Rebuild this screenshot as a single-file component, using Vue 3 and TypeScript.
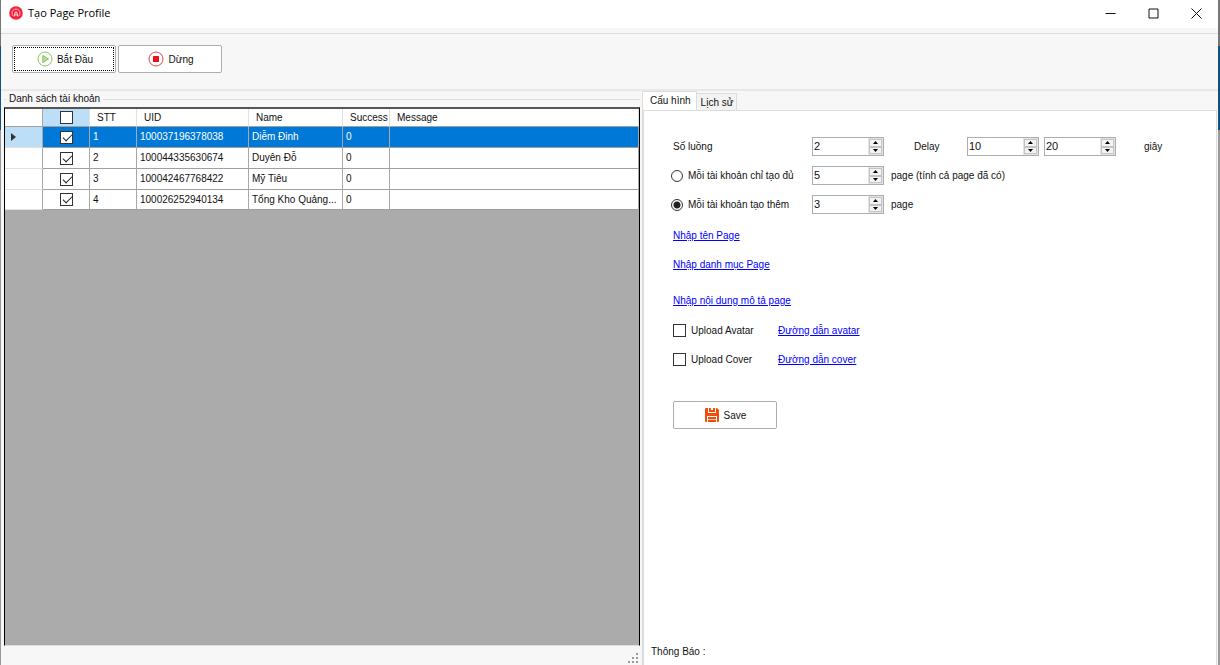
<script setup lang="ts">
import { reactive, ref } from 'vue'

interface Account {
  checked: boolean
  uid: string
  name: string
  success: number
  message: string
}

const accounts = reactive<Account[]>([
  { checked: true, uid: '100037196378038', name: 'Diễm Đinh', success: 0, message: '' },
  { checked: true, uid: '100044335630674', name: 'Duyên Đỗ', success: 0, message: '' },
  { checked: true, uid: '100042467768422', name: 'Mỹ Tiêu', success: 0, message: '' },
  { checked: true, uid: '100026252940134', name: 'Tổng Kho Quảng...', success: 0, message: '' },
])
const allChecked = ref(false)
const selected = ref(0)
const tab = ref<'config' | 'history'>('config')
const mode = ref<'upto' | 'more'>('more')
const values = reactive({ threads: 2, min: 10, max: 20, upto: 5, more: 3 })
type Key = keyof typeof values
const upload = reactive({ avatar: false, cover: false })

const spinners: Record<Key, string> = {
  threads: 'Số luồng',
  min: 'Delay',
  max: 'Delay',
  upto: 'Mỗi tài khoản chỉ tạo đủ',
  more: 'Mỗi tài khoản tạo thêm',
}
const delayKeys: Key[] = ['min', 'max']

interface Row {
  key: Key
  mode?: 'upto' | 'more'
  after?: string
}
const rows: Row[] = [
  { key: 'threads' },
  { key: 'upto', mode: 'upto', after: 'page (tính cả page đã có)' },
  { key: 'more', mode: 'more', after: 'page' },
]

function toggleAll() {
  accounts.forEach((a) => (a.checked = allChecked.value))
}
function step(key: Key, by: number) {
  values[key] = Math.max(0, Number(values[key]) + by)
}
</script>

<template>
  <div class="desktop">
    <main class="window">
      <header class="titlebar">
        <svg class="logo" viewBox="0 0 14 14" aria-hidden="true">
          <circle cx="7" cy="7" r="6.8" fill="#f9203c" />
          <path d="M4.300 10A4 4 0 1 1 9.700 10" fill="none" stroke="#ffc9cf" stroke-width="0.9" />
          <path d="M5.200 10.500L6 6.500Q7 4.800 8 6.500L8.800 10.500M7 7v3" fill="none" stroke="#ffe3e6" stroke-width="0.9" />
        </svg>
        <h1>Tạo Page Profile</h1>
        <div class="controls">
          <button type="button" aria-label="Minimize">
            <svg viewBox="0 0 11 11"><path d="M0.500 5.500H10.500" /></svg>
          </button>
          <button type="button" aria-label="Maximize">
            <svg viewBox="0 0 11 11"><path d="M1 1H10V10H1Z" /></svg>
          </button>
          <button type="button" aria-label="Close">
            <svg viewBox="0 0 11 11"><path d="M0.500 0.500L10.500 10.500M10.500 0.500L0.500 10.500" /></svg>
          </button>
        </div>
      </header>

      <section class="toolbar">
        <button type="button" class="btn focused">
          <svg viewBox="0 0 16 16" aria-hidden="true">
            <circle cx="8" cy="8" r="7" fill="#fff" stroke="#8cc665" stroke-width="1" />
            <path d="M5.800 4.500L11.500 8L5.800 11.500Z" fill="#b5dd98" stroke="#7dbd52" stroke-width="0.900" />
          </svg>
          <span>Bắt Đầu</span>
        </button>
        <button type="button" class="btn">
          <svg viewBox="0 0 16 16" aria-hidden="true">
            <circle cx="8" cy="8" r="7" fill="#fff" stroke="#e04a50" stroke-width="1" />
            <rect x="5" y="5" width="6" height="6" rx="0.500" fill="#f00f14" />
          </svg>
          <span>Dừng</span>
        </button>
      </section>

      <div class="panes">
        <section class="left">
          <h2><span>Danh sách tài khoản</span></h2>
          <div class="grid">
            <table>
              <colgroup>
                <col class="c-mark" /><col class="c-check" /><col class="c-stt" /><col class="c-uid" />
                <col class="c-name" /><col class="c-success" /><col />
              </colgroup>
              <thead>
                <tr>
                  <th></th>
                  <th class="check hot">
                    <input v-model="allChecked" type="checkbox" aria-label="Chọn tất cả" @change="toggleAll" />
                  </th>
                  <th>STT</th>
                  <th>UID</th>
                  <th>Name</th>
                  <th>Success</th>
                  <th>Message</th>
                </tr>
              </thead>
              <tbody>
                <tr
                  v-for="(a, i) in accounts"
                  :key="a.uid"
                  :class="{ selected: selected === i }"
                  @click="selected = i"
                >
                  <td class="mark">
                    <svg v-if="selected === i" viewBox="0 0 5 8" aria-hidden="true"><path d="M0 0L5 4L0 8Z" fill="#333" /></svg>
                  </td>
                  <td class="check"><input v-model="a.checked" type="checkbox" :aria-label="a.name" /></td>
                  <td>{{ i + 1 }}</td>
                  <td>{{ a.uid }}</td>
                  <td>{{ a.name }}</td>
                  <td>{{ a.success }}</td>
                  <td>{{ a.message }}</td>
                </tr>
              </tbody>
            </table>
          </div>
          <footer class="grip">
            <svg viewBox="0 0 10 10" aria-hidden="true">
              <path d="M8 0h2v2h-2zM4 4h2v2h-2zM8 4h2v2h-2zM0 8h2v2h-2zM4 8h2v2h-2zM8 8h2v2h-2z" fill="#999" />
            </svg>
          </footer>
        </section>

        <section class="right">
          <div class="tabs" role="tablist">
            <button type="button" role="tab" :aria-selected="tab === 'config'" @click="tab = 'config'">Cấu hình</button>
            <button type="button" role="tab" :aria-selected="tab === 'history'" @click="tab = 'history'">Lịch sử</button>
          </div>
          <div class="page">
            <form v-show="tab === 'config'" @submit.prevent>
              <div v-for="r in rows" :key="r.key" class="row">
                <label v-if="!r.mode" class="caption" :for="r.key">{{ spinners[r.key] }}</label>
                <label v-else class="caption radio">
                  <input v-model="mode" type="radio" name="mode" :value="r.mode" />
                  <span>{{ spinners[r.key] }}</span>
                </label>
                <div class="spin">
                  <input :id="r.key" v-model="values[r.key]" type="text" inputmode="numeric" :aria-label="spinners[r.key]" />
                  <div class="arrows">
                    <button type="button" aria-label="+" @click="step(r.key, 1)">
                      <svg viewBox="0 0 5 3"><path d="M0 3L2.500 0L5 3Z" /></svg>
                    </button>
                    <button type="button" aria-label="-" @click="step(r.key, -1)">
                      <svg viewBox="0 0 5 3"><path d="M0 0L2.500 3L5 0Z" /></svg>
                    </button>
                  </div>
                </div>
                <span v-if="r.after" class="after">{{ r.after }}</span>
                <template v-else>
                  <label class="delay" for="min">Delay</label>
                  <div v-for="k in delayKeys" :key="k" class="spin">
                    <input :id="k" v-model="values[k]" type="text" inputmode="numeric" :aria-label="spinners[k]" />
                    <div class="arrows">
                      <button type="button" aria-label="+" @click="step(k, 1)">
                        <svg viewBox="0 0 5 3"><path d="M0 3L2.500 0L5 3Z" /></svg>
                      </button>
                      <button type="button" aria-label="-" @click="step(k, -1)">
                        <svg viewBox="0 0 5 3"><path d="M0 0L2.500 3L5 0Z" /></svg>
                      </button>
                    </div>
                  </div>
                  <span class="unit">giây</span>
                </template>
              </div>

              <div class="links">
                <div class="row"><a href="#ten">Nhập tên Page</a></div>
                <div class="row"><a href="#danh-muc">Nhập danh mục Page</a></div>
                <div class="row spaced"><a href="#mo-ta">Nhập nội dung mô tả page</a></div>
                <div class="row">
                  <label class="upload"><input v-model="upload.avatar" type="checkbox" /><span>Upload Avatar</span></label>
                  <a href="#avatar">Đường dẫn avatar</a>
                </div>
                <div class="row">
                  <label class="upload"><input v-model="upload.cover" type="checkbox" /><span>Upload Cover</span></label>
                  <a href="#cover">Đường dẫn cover</a>
                </div>
              </div>
              <button type="submit" class="btn save">
                <svg viewBox="0 0 16 16" aria-hidden="true">
                  <path d="M1 2Q1 1 2 1H4V6H12V1H13L15 3V14Q15 15 14 15H13V9H3V15H2Q1 15 1 14Z" fill="#f04e0c" />
                  <path d="M5 1H7V3H9V1H11V5H5ZM3 6H13V9H3ZM4 10H12V15H4Z" fill="#f04e0c" />
                  <path d="M4 12.500H12" stroke="#fbc4ab" />
                </svg>
                <span>Save</span>
              </button>
            </form>
            <p class="status">Thông Báo :</p>
          </div>
        </section>
      </div>
    </main>
  </div>
</template>

<style>
body {
  margin: 0;
}
</style>

<style scoped>
* {
  box-sizing: border-box;
}
.desktop {
  min-height: 100vh;
  display: flex;
  padding: 0 2px 0 1px;
  background: linear-gradient(#777 0 46px, #12507f 46px 130px, #999 130px);
  font: 10px/14px "Liberation Sans", Arial, sans-serif;
  color: #111;
}
.window {
  flex: 1;
  min-width: 0;
  display: flex;
  flex-direction: column;
  background: #f7f7f7;
}
button,
input {
  font: inherit;
  color: inherit;
  margin: 0;
}
.titlebar {
  height: 28px;
  display: flex;
  align-items: center;
  gap: 5px;
  padding-left: 8px;
  background: #fff;
}
.logo {
  width: 14px;
  height: 14px;
  margin-bottom: 2px;
}
h1 {
  margin: 0 0 2px;
  font: 11px/16px "Open Sans", "Noto Sans", sans-serif;
  color: #000;
}
.controls {
  display: flex;
  align-self: stretch;
  margin-left: auto;
}
.controls button {
  width: 43px;
  padding: 0 0 2px;
  border: 0;
  background: none;
  display: flex;
  align-items: center;
  justify-content: center;
}
.controls svg {
  width: 11px;
  height: 11px;
  fill: none;
  stroke: #111;
}
.toolbar {
  display: flex;
  gap: 2px;
  margin-top: 5px;
  padding: 11px 0 16px 11px;
  border-top: 1px solid #dcdcdc;
  border-bottom: 2px solid #e8e8e8;
}
.btn {
  width: 104px;
  height: 28px;
  padding: 0;
  display: flex;
  align-items: center;
  justify-content: center;
  gap: 4px;
  border: 1px solid #adadad;
  border-radius: 2px;
  background: #fff;
}
.btn svg {
  width: 16px;
  height: 16px;
}
.btn span {
  padding-top: 1px;
}
.toolbar .btn {
  padding-left: 2px;
}
.focused {
  outline: 1px dotted #000;
  outline-offset: -3px;
}
.panes {
  flex: 1;
  display: grid;
  grid-template-columns: minmax(0, 641fr) minmax(0, 576fr);
}
.left {
  display: flex;
  flex-direction: column;
  padding: 0 2px 0 3px;
}
h2 {
  margin: 0;
  font-size: 10px;
  font-weight: 400;
  line-height: 16px;
  display: flex;
  align-items: center;
  gap: 3px;
}
h2::before,
h2::after {
  content: "";
  height: 1px;
  background: #dcdcdc;
  width: 2px;
}
h2::after {
  flex: 1;
  width: auto;
}
.grid {
  flex: 1;
  border: 1px solid #000;
  border-top: 2px solid #555;
  border-bottom: 1px solid #ddd;
  background: #ababab;
}
table {
  width: 100%;
  table-layout: fixed;
  border-collapse: separate;
  border-spacing: 0;
  background: #fff;
}
.c-mark {
  width: 38px;
}
.c-check,
.c-stt,
.c-success {
  width: 47px;
}
.c-uid {
  width: 112px;
}
.c-name {
  width: 94px;
}
th,
td {
  height: 21px;
  padding: 0 3px;
  border-right: 1px solid #a8a8a8;
  border-bottom: 1px solid #a0a0a0;
  text-align: left;
  font-weight: 400;
  white-space: nowrap;
  overflow: hidden;
}
th {
  height: 18px;
  padding: 0 0 0 7px;
  border-right-color: #e2e2e2;
}
tbody tr:last-child td {
  height: 20px;
}
th:first-child {
  border-right-color: #a8a8a8;
}
th.hot {
  background: #bcdef6;
}
th.check,
td.check {
  padding: 0;
  text-align: center;
}
td.mark {
  padding: 0 0 0 6px;
  border-bottom-color: #e2e2e2;
}
.mark svg {
  display: block;
  width: 5px;
  height: 8px;
}
.selected td {
  background: #0078d7;
  color: #fff;
}
.selected td.mark {
  background: #bcdef6;
}
input[type="checkbox"] {
  appearance: none;
  width: 13px;
  height: 13px;
  border: 1px solid #333;
  background: #fff;
  display: block;
  flex: none;
}
.check input {
  margin: 0 auto;
}
input[type="checkbox"]:checked::before {
  content: "";
  display: block;
  width: 8px;
  height: 4px;
  margin: 2px 0 0 2px;
  border: solid #222;
  border-width: 0 0 1px 1px;
  transform: rotate(-45deg);
}
.grip {
  height: 19px;
  display: flex;
  align-items: center;
  justify-content: flex-end;
  padding: 5px 2px 0 0;
}
.grip svg {
  width: 10px;
  height: 10px;
}
.right {
  display: flex;
  flex-direction: column;
  padding-right: 1px;
}
.tabs {
  height: 19px;
  display: flex;
  align-items: flex-end;
}
.tabs button {
  height: 17px;
  padding: 1px 3px 0 4px;
  border: 1px solid #dcdcdc;
  border-width: 1px 1px 0 0;
  background: #f3f3f3;
}
.tabs button[aria-selected="true"] {
  height: 20px;
  padding: 0 5px 2px 7px;
  margin-bottom: -1px;
  border-left-width: 1px;
  background: #fff;
}
.page {
  flex: 1;
  display: flex;
  flex-direction: column;
  padding-left: 29px;
  border: 1px solid #dcdcdc;
  border-width: 1px 1px 0 2px;
  background: #fff;
}
form {
  padding-top: 21px;
}
.row {
  height: 29px;
  display: flex;
  align-items: center;
}
.links {
  padding-top: 2px;
}
.spaced {
  margin: 7px 0 1px;
}
.caption {
  width: 139px;
}
.radio {
  display: flex;
  align-items: center;
  gap: 5px;
  margin-left: -2px;
  width: 141px;
}
.radio input {
  appearance: none;
  width: 12px;
  height: 12px;
  border: 1px solid #333;
  border-radius: 50%;
  background: #fff;
}
.radio input:checked {
  background: radial-gradient(circle, #222 0 3px, #fff 4px);
}
.spin {
  width: 72px;
  height: 19px;
  display: flex;
  border: 1px solid #abadb3;
  background: #fff;
}
.spin + .spin {
  margin-left: 5px;
}
.spin input {
  flex: 1;
  min-width: 0;
  padding: 0 1px 2px;
  border: 0;
  outline: 0;
  background: none;
  font-size: 11px;
}
.arrows {
  width: 15px;
  display: flex;
  flex-direction: column;
  padding: 1px;
  background: #e4e4e4;
}
.arrows button {
  flex: 1;
  min-height: 0;
  padding: 0;
  display: flex;
  align-items: center;
  justify-content: center;
  border: 1px solid #c4c4c4;
  background: #f3f3f3;
}
.arrows svg {
  width: 5px;
  height: 3px;
}
.after {
  margin-left: 7px;
}
.delay {
  width: 53px;
  margin-left: 30px;
}
.unit {
  margin-left: 28px;
}
a {
  color: #00f;
}
.upload {
  width: 105px;
  display: flex;
  align-items: center;
  gap: 5px;
}
.save {
  margin-top: 27px;
}
.status {
  margin: auto 0 6px -22px;
}
</style>
